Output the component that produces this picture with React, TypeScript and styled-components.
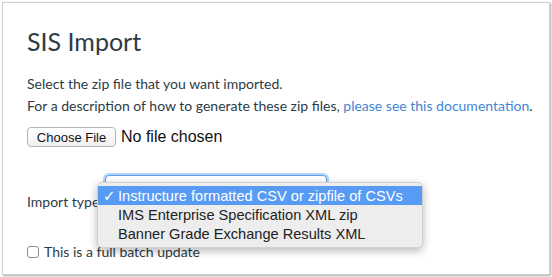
import React from "react";
import styled, { createGlobalStyle } from "styled-components";

const GlobalStyle = createGlobalStyle`
  html, body {
    margin: 0;
    padding: 0;
    background: #ffffff;
  }
  body {
    font-family: Lato, "Liberation Sans", sans-serif;
    color: #2d3b45;
  }
`;

const Frame = styled.div`
  box-sizing: border-box;
  margin: 2px;
  width: 548px;
  height: 273px;
  border: 1px solid #cfcfcf;
  box-shadow: 1px 1px 2px rgba(0, 0, 0, 0.35);
  padding: 24px 0 0 24px;
  background: #fff;
`;

const Title = styled.h1`
  margin: 0;
  font-size: 25px;
  line-height: 29px;
  font-weight: 400;
  color: #2d3b45;
`;

const Intro = styled.p`
  margin: 17px 0 0;
  font-size: 14px;
  line-height: 22px;
`;

const DocLink = styled.a`
  color: #3f86d4;
  text-decoration: none;
`;

const FileRow = styled.div`
  display: flex;
  align-items: center;
  gap: 5px;
  margin-top: 10px;
  height: 20px;
`;

const FileButton = styled.button`
  box-sizing: border-box;
  height: 20px;
  width: 89px;
  padding: 0;
  border: 1px solid #b5b5b5;
  border-radius: 4px;
  background: linear-gradient(#ffffff, #f1f1f1);
  font-family: "Liberation Sans", sans-serif;
  font-size: 13px;
  color: #111;
`;

const FileStatus = styled.span`
  font-family: "Liberation Sans", sans-serif;
  font-size: 16px;
  color: #111;
`;

const ImportRow = styled.div`
  display: flex;
  align-items: flex-start;
  margin-top: 28px;
`;

const Label = styled.span`
  font-size: 14px;
  line-height: 17px;
  padding-top: 18px;
  width: 78px;
`;

const SelectWrap = styled.div`
  position: relative;
  width: 222px;
  height: 36px;
  box-sizing: border-box;
  border: 1px solid #5b9dea;
  border-radius: 4px;
  box-shadow: 0 0 0 2px rgba(91, 157, 234, 0.45);
  background: #fff;
`;

const Menu = styled.ul`
  position: absolute;
  left: -9px;
  top: 6px;
  width: 326px;
  box-sizing: border-box;
  margin: 0;
  padding: 3px 0 4px;
  list-style: none;
  background: #ededed;
  border: 1px solid #d2d2d2;
  border-radius: 5px;
  box-shadow: 0 3px 9px rgba(0, 0, 0, 0.28);
  z-index: 2;
`;

const Item = styled.li<{ $active?: boolean }>`
  display: flex;
  align-items: center;
  height: 19px;
  padding-left: 5px;
  font-family: "Liberation Sans", sans-serif;
  font-size: 14.6px;
  color: ${(p) => (p.$active ? "#ffffff" : "#222222")};
  background: ${(p) => (p.$active ? "#579bf5" : "transparent")};
`;

const Check = styled.span`
  width: 15px;
  flex: none;
  font-family: "DejaVu Sans", sans-serif;
  font-size: 15px;
  font-weight: 700;
`;

const CheckRow = styled.label`
  display: flex;
  align-items: center;
  gap: 5px;
  margin-top: 32px;
  font-size: 14px;
  line-height: 17px;
`;

const Box = styled.span`
  box-sizing: border-box;
  width: 12px;
  height: 12px;
  border: 1px solid #8e8e8e;
  border-radius: 3px;
  background: #fff;
`;

const options = [
  "Instructure formatted CSV or zipfile of CSVs",
  "IMS Enterprise Specification XML zip",
  "Banner Grade Exchange Results XML",
];

const App = () => {
  return (
    <>
      <GlobalStyle />
      <Frame>
        <Title>SIS Import</Title>
        <Intro>
          Select the zip file that you want imported.
          <br />
          For a description of how to generate these zip files,{" "}
          <DocLink href="#">please see this documentation</DocLink>.
        </Intro>
        <FileRow>
          <FileButton>Choose File</FileButton>
          <FileStatus>No file chosen</FileStatus>
        </FileRow>
        <ImportRow>
          <Label>Import type:</Label>
          <SelectWrap>
            <Menu>
              {options.map((o, i) => (
                <Item key={o} $active={i === 0}>
                  <Check>{i === 0 ? "✓" : ""}</Check>
                  {o}
                </Item>
              ))}
            </Menu>
          </SelectWrap>
        </ImportRow>
        <CheckRow>
          <Box />
          This is a full batch update
        </CheckRow>
      </Frame>
    </>
  );
};

export default App;
